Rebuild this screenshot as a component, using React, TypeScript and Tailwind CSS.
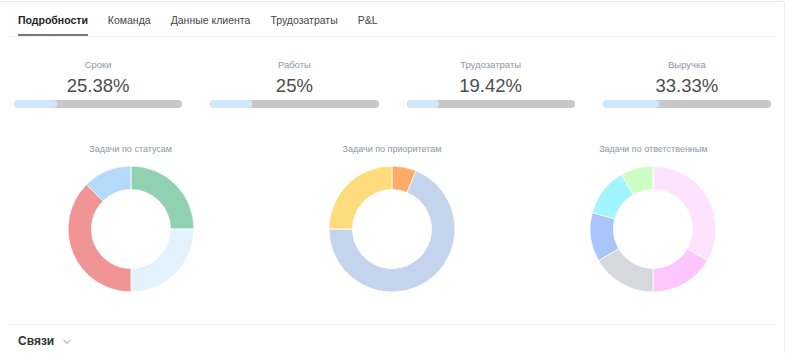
import { ChevronDown } from "lucide-react";

type Seg = { v: number; color: string };

const tabs = ["Подробности", "Команда", "Данные клиента", "Трудозатраты", "P&L"];

const stats = [
  { label: "Сроки", value: "25.38%", pct: 25.38 },
  { label: "Работы", value: "25%", pct: 25 },
  { label: "Трудозатраты", value: "19.42%", pct: 19.42 },
  { label: "Выручка", value: "33.33%", pct: 33.33 },
];

const charts: { title: string; segs: Seg[] }[] = [
  {
    title: "Задачи по статусам",
    segs: [
      { v: 25, color: "#8fd1b1" },
      { v: 25, color: "#e3f2fd" },
      { v: 37.5, color: "#ef9595" },
      { v: 12.5, color: "#b5d9f9" },
    ],
  },
  {
    title: "Задачи по приоритетам",
    segs: [
      { v: 6.25, color: "#fdab66" },
      { v: 68.75, color: "#c4d4ec" },
      { v: 25, color: "#fedc7b" },
    ],
  },
  {
    title: "Задачи по ответственным",
    segs: [
      { v: 33.33, color: "#fde3fd" },
      { v: 16.67, color: "#fdc6fd" },
      { v: 16.67, color: "#d6d8de" },
      { v: 12.5, color: "#a9c5fb" },
      { v: 12.5, color: "#a2f5fe" },
      { v: 8.33, color: "#cdfec4" },
    ],
  },
];

function arc(cx: number, cy: number, r0: number, r1: number, a0: number, a1: number) {
  const p = (r: number, a: number) => {
    const t = ((a - 90) * Math.PI) / 180;
    return [cx + r * Math.cos(t), cy + r * Math.sin(t)];
  };
  const large = a1 - a0 > 180 ? 1 : 0;
  const [x0, y0] = p(r1, a0);
  const [x1, y1] = p(r1, a1);
  const [x2, y2] = p(r0, a1);
  const [x3, y3] = p(r0, a0);
  return `M${x0} ${y0} A${r1} ${r1} 0 ${large} 1 ${x1} ${y1} L${x2} ${y2} A${r0} ${r0} 0 ${large} 0 ${x3} ${y3} Z`;
}

function Donut({ segs }: { segs: Seg[] }) {
  let acc = 0;
  return (
    <svg width="128" height="128" viewBox="0 0 128 128">
      {segs.map((s, i) => {
        const a0 = (acc / 100) * 360;
        acc += s.v;
        const a1 = (acc / 100) * 360;
        return (
          <path key={i} d={arc(64, 64, 39.5, 63, a0, a1)} fill={s.color} stroke="#fff" strokeWidth="0.8" />
        );
      })}
    </svg>
  );
}

export default function App() {
  return (
    <div
      className="w-[785px] h-[353px] bg-white overflow-hidden flex flex-col"
      style={{ fontFamily: "'Liberation Sans', Arial, sans-serif" }}
    >
      <div className="h-[1px] mt-[1px] bg-[#e6e6e6] w-[783px]" />
      <div className="flex flex-1 flex-col border-r border-[#ececec] w-[785px]">
        {/* tabs */}
        <div className="flex items-end gap-[20px] h-[35px] mx-[8px] pl-[10px] border-b border-[#f0f0f0] w-[768px]">
          {tabs.map((t, i) => (
            <div
              key={t}
              className={`text-[10.5px] leading-[16px] ${
                i === 0 ? "font-semibold text-[#222] border-b-2 border-[#777] pb-[6px]" : "text-[#444] pb-[7px] mb-[1px]"
              }`}
            >
              {t}
            </div>
          ))}
        </div>

        {/* stats */}
        <div className="grid grid-cols-4 gap-[28px] pl-[14px] pr-[13px] pt-[21px]">
          {stats.map((s) => (
            <div key={s.label} className="flex flex-col items-center">
              <div className="text-[9.5px] leading-[14px] text-[#8c97a4]">{s.label}</div>
              <div className="text-[18.5px] leading-[22px] mt-[3px] text-[#4d4d4d]">{s.value}</div>
              <div className="mt-[3px] w-full h-[8px] rounded-full bg-[#c8c8c8] overflow-hidden">
                <div className="h-full rounded-full bg-[#cfe8fc]" style={{ width: `${s.pct}%` }} />
              </div>
            </div>
          ))}
        </div>

        {/* charts */}
        <div className="grid grid-cols-3 pt-[34px]">
          {charts.map((c) => (
            <div key={c.title} className="flex flex-col items-center">
              <div className="text-[9px] leading-[14px] text-[#8c97a4]">{c.title}</div>
              <div className="mt-[9px]">
                <Donut segs={c.segs} />
              </div>
            </div>
          ))}
        </div>

        {/* bottom */}
        <div className="mt-auto mx-[8px] w-[768px] border-t border-[#f0f0f0] h-[29px] flex items-center pt-[4px] pl-[10px] gap-[7px]">
          <span className="text-[12px] font-semibold text-[#333]">Связи</span>
          <ChevronDown size={12} strokeWidth={1.5} className="text-[#666] mt-[1px]" />
        </div>
      </div>
    </div>
  );
}
